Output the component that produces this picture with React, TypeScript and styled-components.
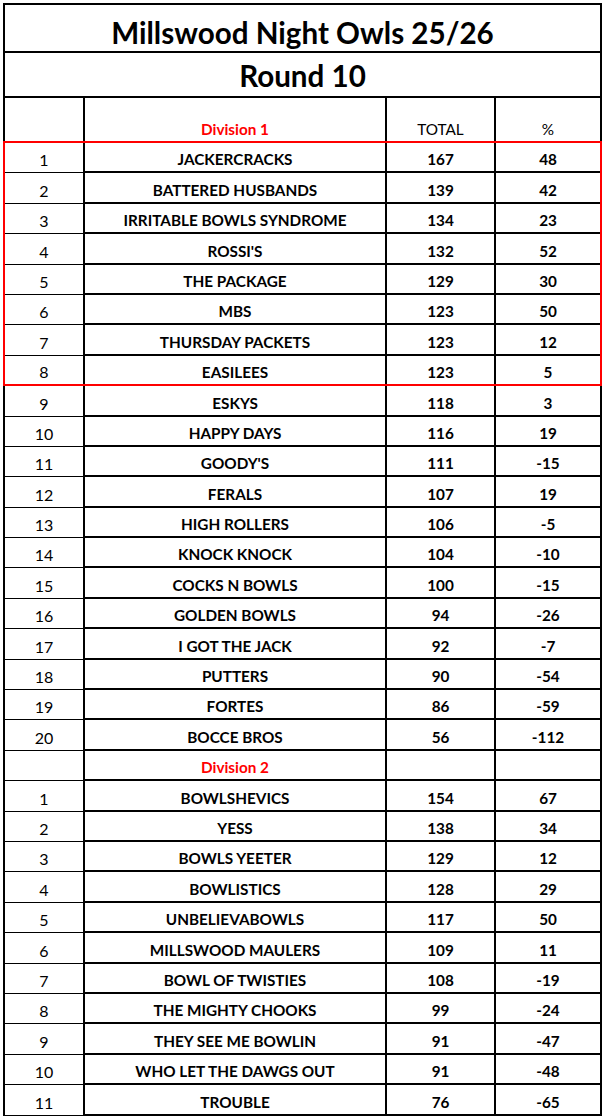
import React from 'react'
import styled, { createGlobalStyle } from 'styled-components'

type Team = [number, string, number, number]

const division1: Team[] = [
  [1, 'JACKERCRACKS', 167, 48],
  [2, 'BATTERED HUSBANDS', 139, 42],
  [3, 'IRRITABLE BOWLS SYNDROME', 134, 23],
  [4, "ROSSI'S", 132, 52],
  [5, 'THE PACKAGE', 129, 30],
  [6, 'MBS', 123, 50],
  [7, 'THURSDAY PACKETS', 123, 12],
  [8, 'EASILEES', 123, 5],
  [9, 'ESKYS', 118, 3],
  [10, 'HAPPY DAYS', 116, 19],
  [11, "GOODY'S", 111, -15],
  [12, 'FERALS', 107, 19],
  [13, 'HIGH ROLLERS', 106, -5],
  [14, 'KNOCK KNOCK', 104, -10],
  [15, 'COCKS N BOWLS', 100, -15],
  [16, 'GOLDEN BOWLS', 94, -26],
  [17, 'I GOT THE JACK', 92, -7],
  [18, 'PUTTERS', 90, -54],
  [19, 'FORTES', 86, -59],
  [20, 'BOCCE BROS', 56, -112],
]

const division2: Team[] = [
  [1, 'BOWLSHEVICS', 154, 67],
  [2, 'YESS', 138, 34],
  [3, 'BOWLS YEETER', 129, 12],
  [4, 'BOWLISTICS', 128, 29],
  [5, 'UNBELIEVABOWLS', 117, 50],
  [6, 'MILLSWOOD MAULERS', 109, 11],
  [7, 'BOWL OF TWISTIES', 108, -19],
  [8, 'THE MIGHTY CHOOKS', 99, -24],
  [9, 'THEY SEE ME BOWLIN', 91, -47],
  [10, 'WHO LET THE DAWGS OUT', 91, -48],
  [11, 'TROUBLE', 76, -65],
]

const ROW = 30.4

export default function App() {
  const top = division1.slice(0, 8)
  const rest = division1.slice(8)

  return (
    <>
      <GlobalStyle />
      <Sheet>
        <Title $first>Millswood Night Owls 25/26</Title>
        <Title>Round 10</Title>
        <HeadRow>
          <Cell $rank $open />
          <Cell $open>
            <Division>Division 1</Division>
          </Cell>
          <Cell $open>TOTAL</Cell>
          <Cell $open $end>%</Cell>
        </HeadRow>
        <Highlight>
          {top.map((t, i) => (
            <TeamRow key={t[0]} team={t} inBox last={i === top.length - 1} />
          ))}
        </Highlight>
        {rest.map((t) => (
          <TeamRow key={t[0]} team={t} />
        ))}
        <Row>
          <Cell $rank />
          <Cell>
            <Division>Division 2</Division>
          </Cell>
          <Cell />
          <Cell $end />
        </Row>
        {division2.map((t) => (
          <TeamRow key={t[0]} team={t} />
        ))}
      </Sheet>
    </>
  )
}

function TeamRow({
  team,
  inBox,
  last,
}: {
  team: Team
  inBox?: boolean
  last?: boolean
}) {
  const [rank, name, total, pct] = team
  return (
    <Row $boxed={inBox} $short={last}>
      <Cell $rank $open={last}>
        {rank}
      </Cell>
      <Cell $bold $open={last}>
        {name}
      </Cell>
      <Cell $bold $open={last}>
        {total}
      </Cell>
      <Cell $bold $end $open={last}>
        {pct}
      </Cell>
    </Row>
  )
}

const GlobalStyle = createGlobalStyle`
  body {
    margin: 0;
    padding: 3px 0 0 3px;
    background: #fff;
    color: #000;
    font-family: Lato, "Open Sans", "Liberation Sans", sans-serif;
  }
`

const Sheet = styled.div`
  width: 599px;
  display: flex;
  flex-direction: column;
`

const Title = styled.div<{ $first?: boolean }>`
  box-sizing: border-box;
  height: ${({ $first }) => ($first ? 50 : 45)}px;
  border: 2px solid #000;
  border-top-width: ${({ $first }) => ($first ? 2 : 0)}px;
  display: flex;
  align-items: flex-end;
  justify-content: center;
  padding-bottom: ${({ $first }) => ($first ? 1 : 3)}px;
  font-size: 29.6px;
  line-height: 35px;
  font-weight: 700;
`

const Row = styled.div<{ $boxed?: boolean; $short?: boolean }>`
  box-sizing: border-box;
  display: grid;
  grid-template-columns: 80px 302px 109px 104px;
  height: ${({ $short }) => ($short ? ROW - 2 : ROW)}px;
  border-left: ${({ $boxed }) => ($boxed ? 0 : 2)}px solid #000;
  border-right: ${({ $boxed }) => ($boxed ? 0 : 2)}px solid #000;
`

const HeadRow = styled(Row)`
  height: 43px;
`

const Highlight = styled.div`
  border: 2px solid #ff0000;
`

const Cell = styled.div<{
  $rank?: boolean
  $bold?: boolean
  $end?: boolean
  $open?: boolean
}>`
  box-sizing: border-box;
  display: flex;
  align-items: flex-end;
  justify-content: center;
  padding-bottom: 3px;
  border-right: ${({ $end }) => ($end ? 0 : 2)}px solid #000;
  border-bottom: ${({ $rank, $open }) => ($open ? 0 : $rank ? 1 : 2)}px solid #000;
  font-size: ${({ $rank }) => ($rank ? 16 : 15.3)}px;
  line-height: 18px;
  font-weight: ${({ $bold }) => ($bold ? 700 : 400)};
  white-space: nowrap;
`

const Division = styled.span`
  color: #ff0000;
  font-weight: 700;
`
